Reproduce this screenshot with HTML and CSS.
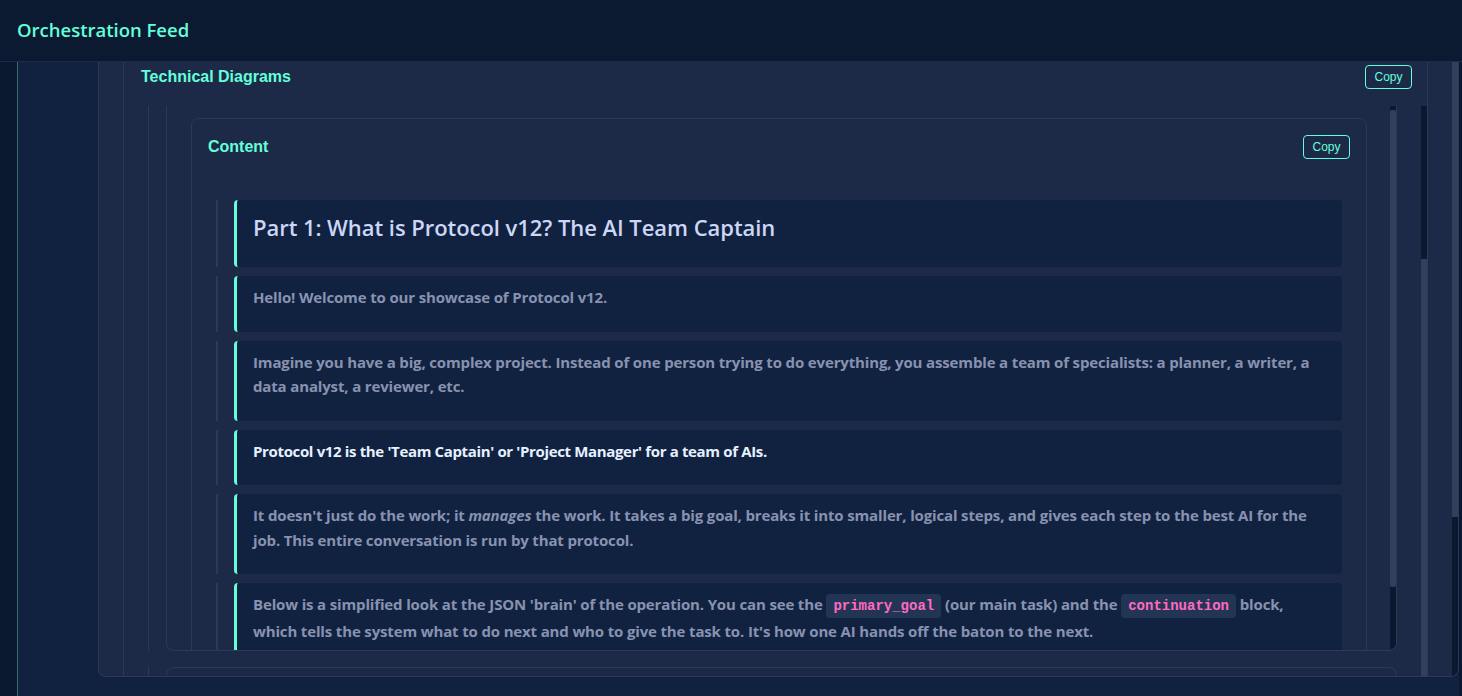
FILE: index.html
```html
<!DOCTYPE html>
<html lang="en">
<head>
<meta charset="utf-8">
<title>Orchestration Feed</title>
<link rel="stylesheet" href="styles.css">
</head>
<body>
<div class="app">
  <header class="topbar"><h1 class="brand">Orchestration Feed</h1></header>
  <div class="main">
    <aside class="rail"></aside>
    <div class="stage">
      <section class="outer">
        <div class="section">
          <div class="section-head">
            <h2 class="label">Technical Diagrams</h2>
            <button class="copy">Copy</button>
          </div>
          <div class="section-body">
            <div class="feed">
              <div class="item">
                <div class="item-card item-card--open">
                  <div class="item-inner">
                    <div class="content-card">
                      <div class="content-head">
                        <h3 class="label">Content</h3>
                        <button class="copy">Copy</button>
                      </div>
                      <div class="blocks">
                        <div class="row"><div class="block"><h4 class="block-title">Part 1: What is Protocol v12? The AI Team Captain</h4></div></div>
                        <div class="row"><div class="block"><p>Hello! Welcome to our showcase of Protocol v12.</p></div></div>
                        <div class="row"><div class="block"><p>Imagine you have a big, complex project. Instead of one person trying to do everything, you assemble a team of specialists: a planner, a writer, a data analyst, a reviewer, etc.</p></div></div>
                        <div class="row"><div class="block"><p><strong>Protocol v12 is the 'Team Captain' or 'Project Manager' for a team of AIs.</strong></p></div></div>
                        <div class="row"><div class="block"><p>It doesn't just do the work; it <em>manages</em> the work. It takes a big goal, breaks it into smaller, logical steps, and gives each step to the best AI for the job. This entire conversation is run by that protocol.</p></div></div>
                        <div class="row"><div class="block"><p>Below is a simplified look at the JSON 'brain' of the operation. You can see the <code>primary_goal</code> (our main task) and the <code>continuation</code> block, which tells the system what to do next and who to give the task to. It's how one AI hands off the baton to the next.</p></div></div>
                      </div>
                    </div>
                  </div>
                  <div class="sb sb-inner"><span class="sb-track sb-t1"></span><span class="sb-thumb sb-th1"></span><span class="sb-track sb-fill"></span></div>
                </div>
              </div>
              <div class="item item--next">
                <div class="item-card"></div>
              </div>
            </div>
            <div class="sb sb-mid"><span class="sb-track sb-t2"></span><span class="sb-thumb sb-fill"></span></div>
          </div>
        </div>
        <div class="outer-gap"></div>
        <div class="sb sb-outer"><span class="sb-thumb sb-th3"></span><span class="sb-track sb-fill"></span></div>
      </section>
      <div class="edge"></div>
    </div>
  </div>
</div>
</body>
</html>
```
FILE: styles.css
```css
* { box-sizing: border-box; }
html, body { margin: 0; padding: 0; }
body {
  background: #112240;
  font-family: "Open Sans", "Liberation Sans", sans-serif;
  overflow: hidden;
}
.app { display: flex; flex-direction: column; height: 696px; width: 1462px; }
.topbar {
  height: 62px; flex: none;
  background: #0b1a31;
  border-bottom: 1px solid #1d2b48;
  display: flex; align-items: center;
  padding: 0 0 2px 17px;
}
.brand { margin: 0; font-size: 18.5px; font-weight: 600; color: #64ffda; }
.main { flex: 1; display: flex; min-height: 0; }
.rail { width: 18px; flex: none; background: #0a192f; border-right: 1px solid #3a6a70; }
.stage { flex: 1; display: flex; padding-left: 80px; min-width: 0; }
.edge { flex: 1; background: #0a192f; }

.outer {
  flex: none; width: 1361px; height: 615px;
  background: #1d2a47;
  border: 1px solid #2c3a59; border-top: none;
  border-radius: 0 0 8px 8px;
  display: flex; align-items: stretch;
  padding-left: 24px; overflow: hidden;
}
.outer-gap { width: 24px; flex: none; }

.section {
  flex: none; width: 1305px; align-self: flex-start;
  border-left: 1px solid #2c3a59; border-right: 1px solid #2c3a59;
  display: flex; flex-direction: column;
}
.section-head {
  display: flex; justify-content: space-between; align-items: center;
  padding: 3px 15px 0 17px; margin-bottom: 17px;
}
.label {
  margin: 0; font-family: "Liberation Sans", Arial, sans-serif;
  font-size: 16px; font-weight: 700; color: #64ffda; line-height: 20px;
}
.copy {
  width: 47px; height: 24px; padding: 0;
  background: transparent; border: 1px solid #64ffda; border-radius: 4px;
  color: #64ffda; font-family: "Liberation Sans", Arial, sans-serif; font-size: 12px;
}
.section-body { display: flex; align-items: stretch; }
.feed { flex: 1; padding: 0 24px; }
.item { border-left: 1px solid #2c3a59; padding-left: 17px; }
.item--next { margin-top: 16px; }
.item-card {
  display: flex; height: 100px;
  border: 1px solid #2c3a59; border-radius: 8px;
  overflow: hidden;
}
.item-card--open { height: 545px; border-top: none; border-radius: 0 0 8px 8px; }
.item-inner { flex: 1; padding: 12px 23px 0 24px; overflow: hidden; min-width: 0; }

.content-card {
  border: 1px solid #2c3a59; border-radius: 8px;
  padding: 16px;
}
.content-head { display: flex; justify-content: space-between; align-items: center; }
.blocks { margin-top: 41px; padding: 0 8px; }
.row { border-left: 2px solid #2c3a59; padding-left: 16px; margin-bottom: 9px; }
.block {
  background: #112240;
  border-left: 3px solid #64ffda; border-radius: 4px;
  padding: 9px 16px 22px 16px;
}
.block-title {
  margin: 0; font-size: 22px; font-weight: 600; line-height: 36px; color: #ccd6f6;
  letter-spacing: -0.05px;
}
.block p {
  margin: 0; font-size: 15px; font-weight: 700; line-height: 24.5px; color: #8892b0;
  letter-spacing: -0.15px;
}
.block strong { color: #e6f1ff; font-weight: 700; letter-spacing: -0.35px; }
.block em { font-style: italic; }
.block code {
  font-family: "Liberation Mono", "DejaVu Sans Mono", monospace;
  font-size: 14px; font-weight: 700; color: #ff6ac1; letter-spacing: 0;
  background: #233554; border-radius: 4px; padding: 4px 7px;
}

.sb { width: 6px; flex: none; display: flex; flex-direction: column; }
.sb-track { background: #0a192f; }
.sb-thumb { background: #333f5c; }
.sb-fill { flex: 1; }
.sb-inner { border-radius: 0 0 4px 4px; overflow: hidden; }
.sb-t1 { height: 4px; }
.sb-th1 { height: 477px; border-radius: 3px; }
.sb-t2 { height: 153px; }
.sb-th3 { height: 455px; }
```
